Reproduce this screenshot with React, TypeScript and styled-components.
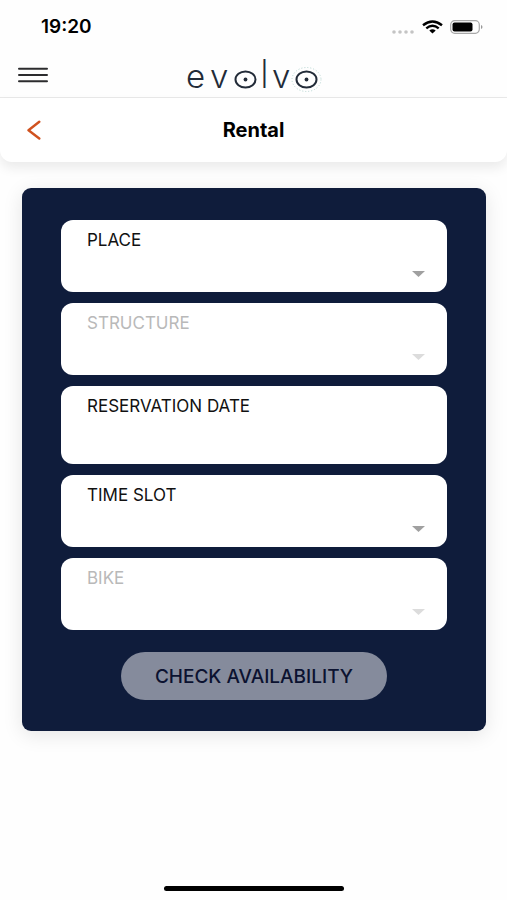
import React from "react";
import styled, { createGlobalStyle } from "styled-components";

const GlobalStyle = createGlobalStyle`
  *, *::before, *::after { box-sizing: border-box; }
  body { margin: 0; background: #fefefe; font-family: Inter, "Liberation Sans", sans-serif; color: #000; }
  button, input, select { font: inherit; color: inherit; }
`;

const Page = styled.div`
  display: flex;
  flex-direction: column;
  min-height: 100vh;
`;

const StatusBar = styled.div`
  display: flex;
  align-items: center;
  justify-content: space-between;
  height: 48px;
  padding: 6px 24px 0 41px;
`;

const Clock = styled.time`
  font-size: 19px;
  line-height: 24px;
  font-weight: 600;
`;

const StatusIcons = styled.div`
  display: flex;
  align-items: center;
  gap: 7px;
`;

const SignalDots = styled.svg`
  align-self: flex-end;
  fill: #c4c4c4;
`;

const Header = styled.header`
  display: grid;
  grid-template-columns: 48px 1fr 48px;
  align-items: end;
  height: 50px;
  padding: 0 9px;
  border-bottom: 1px solid #e9e9e9;
`;

const IconButton = styled.button`
  display: flex;
  align-items: center;
  justify-content: center;
  width: 48px;
  height: 44px;
  padding: 0;
  border: 0;
  background: none;
  cursor: pointer;
`;

const LogoLink = styled.a`
  display: flex;
  justify-content: center;
  color: #222b38;
  text-decoration: none;
`;

const Wordmark = styled.text`
  font-family: Inter, sans-serif;
  font-size: 33px;
  font-weight: 300;
  fill: currentColor;
`;

const TallLetter = styled.tspan`
  font-family: Lato, sans-serif;
  font-size: 40px;
`;

const TitleBar = styled.div`
  display: grid;
  grid-template-columns: 48px 1fr 48px;
  align-items: center;
  height: 64px;
  padding: 0 10px;
  background: #fff;
  border-radius: 0 0 12px 12px;
  box-shadow: 0 6px 12px rgba(0, 0, 0, 0.08);
`;

const Title = styled.h1`
  margin: 0;
  font-size: 20px;
  line-height: 24px;
  font-weight: 700;
  text-align: center;
`;

const Main = styled.main`
  flex: 1;
  padding: 26px 21px 26px 22px;
`;

const Card = styled.form`
  display: flex;
  flex-direction: column;
  gap: 11px;
  padding: 32px 39px 31px;
  background: #0f1c3b;
  border-radius: 9px;
  box-shadow: 0 4px 20px rgba(0, 0, 0, 0.1);
`;

const Field = styled.div<{ $muted?: boolean }>`
  display: grid;
  row-gap: 8px;
  padding: 10px 22px 2px 26px;
  background: #fff;
  border-radius: 12px;
  color: ${(p) => (p.$muted ? "#b9b9b9" : "#111")};
`;

const Label = styled.label`
  font-size: 17px;
  line-height: 20px;
`;

const SelectWrap = styled.div`
  display: grid;
  align-items: center;
`;

const Select = styled.select`
  grid-area: 1 / 1;
  width: 100%;
  height: 32px;
  padding: 0 24px 0 0;
  border: 0;
  appearance: none;
  background: transparent;
  font-size: 17px;
`;

const Caret = styled.svg<{ $muted?: boolean }>`
  grid-area: 1 / 1;
  justify-self: end;
  pointer-events: none;
  fill: ${(p) => (p.$muted ? "#dcdcdc" : "#a0a0a0")};
`;

const DateInput = styled.input`
  width: 100%;
  height: 38px;
  padding: 0;
  border: 0;
  background: transparent;
  font-size: 17px;
`;

const Submit = styled.button`
  align-self: center;
  height: 48px;
  margin-top: 11px;
  padding: 0 34px;
  border: 0;
  border-radius: 24px;
  background: #858b9c;
  color: #0b1230;
  font-size: 19px;
  font-weight: 500;
`;

const HomeArea = styled.footer`
  display: flex;
  justify-content: center;
  padding-bottom: 9px;
`;

const HomeIndicator = styled.div`
  width: 180px;
  height: 5px;
  border-radius: 3px;
  background: #000;
`;

function SelectField({ id, label, disabled }: { id: string; label: string; disabled?: boolean }) {
  return (
    <Field $muted={disabled}>
      <Label htmlFor={id}>{label}</Label>
      <SelectWrap>
        <Select id={id} disabled={disabled} defaultValue="">
          <option value="" />
        </Select>
        <Caret $muted={disabled} width="13" height="6" viewBox="0 0 13 6" aria-hidden="true">
          <path d="M0 0h13L6.5 6z" />
        </Caret>
      </SelectWrap>
    </Field>
  );
}

/* The two round letters of the brand name are bicycle wheels with a hub. */
function Wheel({ cx }: { cx: number }) {
  return (
    <>
      <ellipse cx={cx} cy="31.5" rx="10" ry="8" fill="none" stroke="currentColor" strokeWidth="2" />
      <circle cx={cx} cy="31.5" r="1.9" fill="currentColor" />
    </>
  );
}

function Logo() {
  return (
    <svg width="140" height="49" viewBox="0 0 140 49" aria-hidden="true">
      <Wordmark y="40">
        <tspan x="2">e</tspan>
        <tspan x="26">v</tspan>
        <TallLetter x="76">l</TallLetter>
        <tspan x="88">v</tspan>
      </Wordmark>
      <Wheel cx={61.5} />
      <Wheel cx={122.5} />
      <ellipse cx="122.5" cy="31.5" rx="14.5" ry="12" fill="none" stroke="#b5d5d0" strokeDasharray="1 2" />
    </svg>
  );
}

export default function App() {
  return (
    <Page>
      <GlobalStyle />
      <StatusBar>
        <Clock>19:20</Clock>
        <StatusIcons>
          <SignalDots width="23" height="4" viewBox="0 0 23 4" aria-hidden="true">
            <circle cx="2" cy="2" r="1.8" />
            <circle cx="8" cy="2" r="1.8" />
            <circle cx="14" cy="2" r="1.8" />
            <circle cx="20" cy="2" r="1.8" />
          </SignalDots>
          <svg width="21" height="14" viewBox="0 0 21 14" fill="none" stroke="#000" strokeWidth="2.4" aria-hidden="true">
            <path d="M1 5.2Q10.5-2.4 20 5.2" />
            <path d="M4.3 8.4Q10.5 3.3 16.7 8.4" />
            <path d="M7.3 10.5Q10.5 8 13.7 10.5L10.5 13.5z" fill="#000" stroke="none" />
          </svg>
          <svg width="33" height="14" viewBox="0 0 33 14" aria-hidden="true">
            <rect x="0.7" y="0.7" width="28.6" height="12.6" rx="4" fill="#fff" stroke="#a8a8a8" strokeWidth="1.2" />
            <rect x="2.5" y="2.5" width="20" height="9" rx="2" />
            <path d="M31 5c2 .8 2 3.2 0 4z" fill="#999" />
          </svg>
        </StatusIcons>
      </StatusBar>
      <Header>
        <IconButton type="button" aria-label="Menu">
          <svg width="30" height="16" viewBox="0 0 30 16" stroke="#2c2c2e" strokeWidth="2" strokeLinecap="round">
            <path d="M1 1.8h28M1 8h28M1 14.2h28" />
          </svg>
        </IconButton>
        <LogoLink href="#" aria-label="evolvo">
          <Logo />
        </LogoLink>
      </Header>
      <TitleBar>
        <IconButton type="button" aria-label="Back">
          <svg width="14" height="20" viewBox="0 0 14 20" fill="none" stroke="#d0521f" strokeWidth="2.4" strokeLinecap="round" strokeLinejoin="round">
            <path d="M12.3 1.8L1.5 10.3L12.3 18.5" />
          </svg>
        </IconButton>
        <Title>Rental</Title>
      </TitleBar>
      <Main>
        <Card>
          <SelectField id="place" label="PLACE" />
          <SelectField id="structure" label="STRUCTURE" disabled />
          <Field>
            <Label htmlFor="date">RESERVATION DATE</Label>
            <DateInput id="date" type="text" />
          </Field>
          <SelectField id="slot" label="TIME SLOT" />
          <SelectField id="bike" label="BIKE" disabled />
          <Submit type="submit" disabled>
            CHECK AVAILABILITY
          </Submit>
        </Card>
      </Main>
      <HomeArea>
        <HomeIndicator />
      </HomeArea>
    </Page>
  );
}
